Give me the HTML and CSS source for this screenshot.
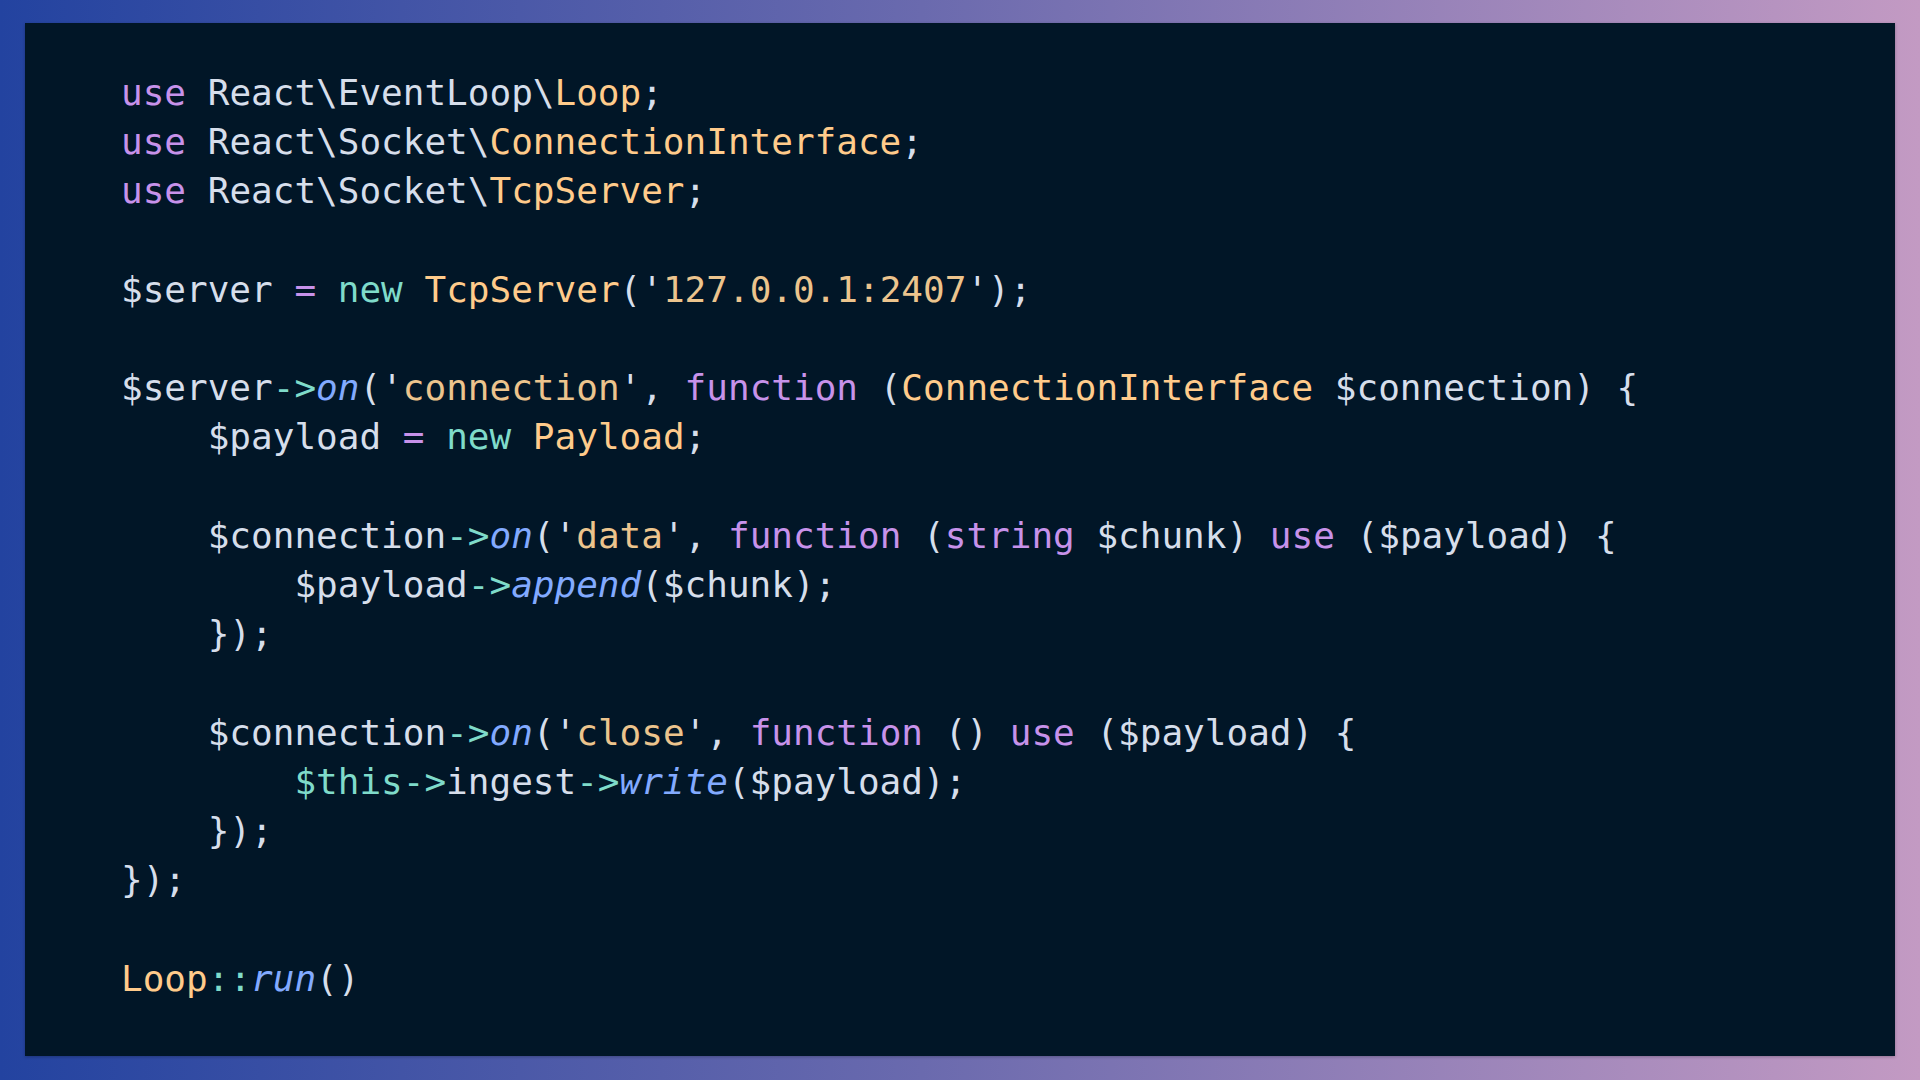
FILE: index.html
```html
<!DOCTYPE html>
<html lang="en">
<head>
<meta charset="utf-8">
<title>Code</title>
<link rel="stylesheet" href="styles.css">
</head>
<body>
<div class="frame">
<pre class="code"><span class="k">use</span> React\EventLoop\<span class="c">Loop</span>;
<span class="k">use</span> React\Socket\<span class="c">ConnectionInterface</span>;
<span class="k">use</span> React\Socket\<span class="c">TcpServer</span>;

$server <span class="k">=</span> <span class="o">new</span> <span class="c">TcpServer</span>(<span class="q">'</span><span class="s">127.0.0.1:2407</span><span class="q">'</span>);

$server<span class="o">-&gt;</span><span class="f">on</span>(<span class="q">'</span><span class="s">connection</span><span class="q">'</span>, <span class="k">function</span> (<span class="c">ConnectionInterface</span> $connection) {
    $payload <span class="k">=</span> <span class="o">new</span> <span class="c">Payload</span>;

    $connection<span class="o">-&gt;</span><span class="f">on</span>(<span class="q">'</span><span class="s">data</span><span class="q">'</span>, <span class="k">function</span> (<span class="k">string</span> $chunk) <span class="k">use</span> ($payload) {
        $payload<span class="o">-&gt;</span><span class="f">append</span>($chunk);
    });

    $connection<span class="o">-&gt;</span><span class="f">on</span>(<span class="q">'</span><span class="s">close</span><span class="q">'</span>, <span class="k">function</span> () <span class="k">use</span> ($payload) {
        <span class="o">$this-&gt;</span>ingest<span class="o">-&gt;</span><span class="f">write</span>($payload);
    });
});

<span class="c">Loop</span><span class="o">::</span><span class="f">run</span>()</pre>
</div>
</body>
</html>
```
FILE: styles.css
```css
html, body {
  margin: 0;
  padding: 0;
  width: 1920px;
  height: 1080px;
  overflow: hidden;
}
body {
  background: linear-gradient(90deg, #2343a0 0%, #6a6aae 48%, #c39ac3 100%);
  padding: 23px 25px 24px 25px;
  box-sizing: border-box;
}
.frame {
  width: 100%;
  height: 100%;
  background: #011627;
  box-sizing: border-box;
  padding: 45px 96px 0 96px;
  box-shadow: 0 1px 3px rgba(0, 0, 0, 0.25);
}
.code {
  margin: 0;
  font-family: "DejaVu Sans Mono", monospace;
  font-size: 36px;
  line-height: 49.2px;
  color: #d6deeb;
  white-space: pre;
}
.k { color: #c792ea; }
.c { color: #ffcb8b; }
.s { color: #ecc48d; }
.q { color: #d6deeb; }
.o { color: #7fdbca; }
.f { color: #82aaff; font-style: italic; }
```
